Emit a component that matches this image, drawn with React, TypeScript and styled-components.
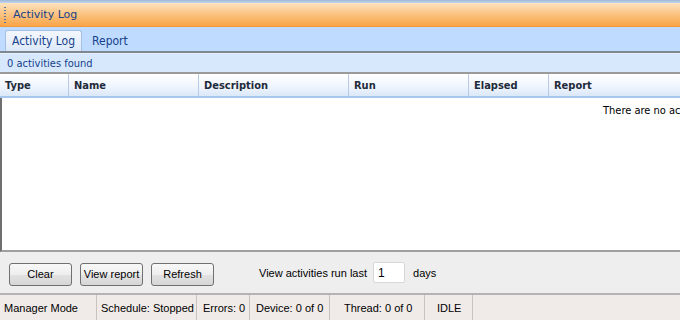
import React from "react";
import styled, { createGlobalStyle } from "styled-components";

const GlobalStyle = createGlobalStyle`
  html, body {
    margin: 0;
    padding: 0;
    background: #ffffff;
    overflow: hidden;
  }
`;

const columns = [
  { label: "Type", width: 68 },
  { label: "Name", width: 130 },
  { label: "Description", width: 150 },
  { label: "Run", width: 120 },
  { label: "Elapsed", width: 80 },
  { label: "Report", width: 132 },
];

const statusItems = [
  { label: "Manager Mode", width: 97, pad: 4 },
  { label: "Schedule: Stopped", width: 100, pad: 4 },
  { label: "Errors: 0", width: 53, pad: 6 },
  { label: "Device: 0 of 0", width: 80, pad: 6 },
  { label: "Thread: 0 of 0", width: 95, pad: 14 },
  { label: "IDLE", width: 48, pad: 12 },
];

const App = () => {
  return (
    <Page>
      <GlobalStyle />
      <TopEdge />
      <TitleBar>
        <Gripper />
        <TitleText>Activity Log</TitleText>
      </TitleBar>
      <TabStrip>
        <Tab active>Activity Log</Tab>
        <Tab>Report</Tab>
      </TabStrip>
      <InfoBar>0 activities found</InfoBar>
      <Grid>
        <HeaderRow>
          {columns.map((c, i) => (
            <HeaderCell key={c.label} $w={c.width} $first={i === 0}>
              {c.label}
            </HeaderCell>
          ))}
        </HeaderRow>
        <GridBody>
          <EmptyText>There are no activities</EmptyText>
        </GridBody>
      </Grid>
      <ButtonPanel>
        <Button>Clear</Button>
        <Button>View report</Button>
        <Button>Refresh</Button>
        <RunLabel>View activities run last</RunLabel>
        <DaysInput defaultValue="1" />
        <DaysLabel>days</DaysLabel>
      </ButtonPanel>
      <StatusBar>
        {statusItems.map((s) => (
          <StatusCell key={s.label} $w={s.width} $pad={s.pad}>
            {s.label}
          </StatusCell>
        ))}
      </StatusBar>
    </Page>
  );
};

export default App;

const Page = styled.div`
  width: 680px;
  height: 320px;
  display: flex;
  flex-direction: column;
  font-family: "DejaVu Sans", "Liberation Sans", sans-serif;
  overflow: hidden;
`;

const TopEdge = styled.div`
  height: 3px;
  background: linear-gradient(#9fb7d8, #c3d6ee);
`;

const TitleBar = styled.div`
  height: 24px;
  display: flex;
  align-items: center;
  background: linear-gradient(#fde3c0 0%, #fbc585 45%, #f9a548 100%);
  border-bottom: 1px solid #f39a3c;
  box-sizing: border-box;
`;

const Gripper = styled.div`
  width: 2px;
  height: 17px;
  margin: 0 7px 0 4px;
  background-image: radial-gradient(circle, #5a73a0 45%, transparent 50%);
  background-size: 2px 3px;
`;

const TitleText = styled.span`
  font-size: 11px;
  color: #15428b;
`;

const TabStrip = styled.div`
  height: 24px;
  display: flex;
  align-items: flex-end;
  gap: 2px;
  padding-left: 5px;
  background: #bfdbff;
  border-bottom: 2px solid #7f8791;
`;

const Tab = styled.div<{ active?: boolean }>`
  height: ${(p) => (p.active ? "21px" : "20px")};
  display: flex;
  align-items: center;
  padding: 0 ${(p) => (p.active ? "6px" : "8px")};
  font-size: 12px;
  color: #15428b;
  font-family: "DejaVu Sans Condensed", "DejaVu Sans", sans-serif;
  box-sizing: border-box;
  border-radius: 3px 3px 0 0;
  ${(p) =>
    p.active
      ? `background: linear-gradient(#f3f7fd, #dde9f9);
         border: 1px solid #a6c0e4;
         border-bottom: none;`
      : `background: transparent;`}
`;

const InfoBar = styled.div`
  height: 18px;
  display: flex;
  align-items: center;
  padding-left: 7px;
  background: #d7e8fd;
  border-top: 1px solid #e6f0fd;
  border-bottom: 2px solid #9a9a9a;
  font-size: 11px;
  color: #15428b;
  font-family: "DejaVu Sans Condensed", "DejaVu Sans", sans-serif;
`;

const Grid = styled.div`
  flex: 1;
  display: flex;
  flex-direction: column;
  border-left: 2px solid #6f6f6f;
  border-bottom: 2px solid #a0a0a0;
  min-height: 0;
`;

const HeaderRow = styled.div`
  height: 24px;
  display: flex;
  background: linear-gradient(#ffffff 0%, #f2f7fe 50%, #dbe8f9 100%);
  border-bottom: 2px solid #a9c6ee;
  box-sizing: border-box;
  margin-left: -2px;
`;

const HeaderCell = styled.div<{ $w: number; $first: boolean }>`
  width: ${(p) => p.$w}px;
  flex: none;
  display: flex;
  align-items: center;
  padding-left: 5px;
  box-sizing: border-box;
  font-size: 11px;
  font-weight: bold;
  color: #1e2a3a;
  font-family: "DejaVu Sans Condensed", "DejaVu Sans", sans-serif;
  border-left: ${(p) => (p.$first ? "none" : "1px solid #b6cbe8")};
`;

const GridBody = styled.div`
  flex: 1;
  background: #ffffff;
  display: flex;
  justify-content: flex-start;
  padding-left: 601px;
  padding-top: 6px;
  overflow: hidden;
  white-space: nowrap;
`;

const EmptyText = styled.div`
  font-size: 11px;
  color: #000;
  font-family: "DejaVu Sans Condensed", "DejaVu Sans", sans-serif;
`;

const ButtonPanel = styled.div`
  height: 43px;
  display: flex;
  align-items: center;
  gap: 8px;
  padding: 0 9px;
  background: #eeeeee;
  border-bottom: 2px solid #b4b4b4;
  box-sizing: border-box;
  font-family: "Liberation Sans", sans-serif;
`;

const Button = styled.button`
  width: 63px;
  height: 23px;
  margin-top: 3px;
  padding: 0;
  border: 1px solid #707070;
  border-radius: 3px;
  background: linear-gradient(#f8f8f8 0%, #eeeeee 50%, #e2e2e2 51%, #d6d6d6 100%);
  font-size: 11px;
  font-family: "Liberation Sans", sans-serif;
  color: #000;
`;

const RunLabel = styled.span`
  margin-left: 37px;
  font-size: 11px;
  color: #000;
`;

const DaysInput = styled.input`
  width: 32px;
  height: 21px;
  box-sizing: border-box;
  margin-left: -2px;
  border: 1px solid #d7d7d7;
  border-radius: 2px;
  background: #ffffff;
  padding: 0 4px;
  font-size: 12px;
  font-family: "Liberation Sans", sans-serif;
  outline: none;
`;

const DaysLabel = styled.span`
  font-size: 11px;
  color: #000;
`;

const StatusBar = styled.div`
  flex: none;
  height: 25px;
  display: flex;
  align-items: stretch;
  background: #f0ebe8;
  font-family: "Liberation Sans", sans-serif;
`;

const StatusCell = styled.div<{ $w: number; $pad: number }>`
  width: ${(p) => p.$w}px;
  flex: none;
  display: flex;
  align-items: center;
  padding-left: ${(p) => p.$pad}px;
  box-sizing: border-box;
  border-right: 1px solid #c8c2bd;
  font-size: 11px;
  color: #000;
  white-space: nowrap;
`;
